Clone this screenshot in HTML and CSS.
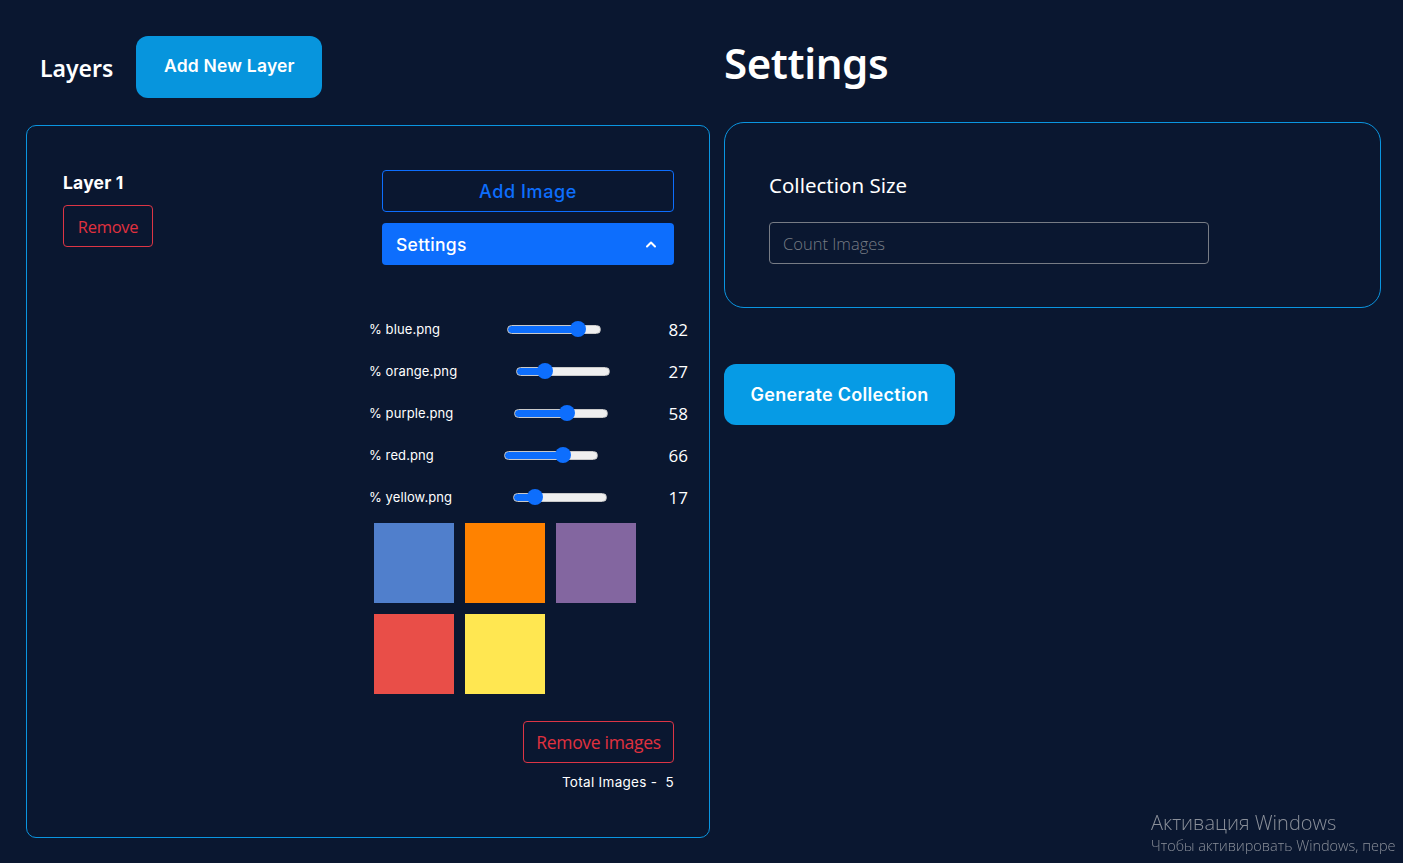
FILE: index.html
```html
<!DOCTYPE html>
<html lang="en">
<head>
<meta charset="utf-8">
<title>Layers</title>
<link rel="stylesheet" href="styles.css">
</head>
<body>
<div class="page">
  <section class="col-left">
    <header class="left-head">
      <h2 class="layers-title">Layers</h2>
      <button class="btn-primary add-layer">Add New Layer</button>
    </header>
    <div class="layer-panel">
      <div class="layer-info">
        <div class="layer-name">Layer 1</div>
        <button class="btn-outline-danger btn-remove">Remove</button>
      </div>
      <div class="layer-body">
        <button class="btn-outline-blue add-image">Add Image</button>
        <div class="settings-bar">
          <span>Settings</span>
          <svg class="chev" width="12" height="8" viewBox="0 0 12 8"><path d="M2 6.5 L6 2.5 L10 6.5" fill="none" stroke="#fff" stroke-width="2" stroke-linecap="round" stroke-linejoin="round"/></svg>
        </div>
        <div class="sliders">
          <div class="srow"><span class="slabel">% blue.png</span><input class="rng" type="range" min="0" max="100" value="82" style="--v:82"><span class="snum">82</span></div>
          <div class="srow"><span class="slabel">% orange.png</span><input class="rng" type="range" min="0" max="100" value="27" style="--v:27"><span class="snum">27</span></div>
          <div class="srow"><span class="slabel">% purple.png</span><input class="rng" type="range" min="0" max="100" value="58" style="--v:58"><span class="snum">58</span></div>
          <div class="srow"><span class="slabel">% red.png</span><input class="rng" type="range" min="0" max="100" value="66" style="--v:66"><span class="snum">66</span></div>
          <div class="srow"><span class="slabel">% yellow.png</span><input class="rng" type="range" min="0" max="100" value="17" style="--v:17"><span class="snum">17</span></div>
        </div>
        <div class="thumbs">
          <div class="sq sq-blue"></div>
          <div class="sq sq-orange"></div>
          <div class="sq sq-purple"></div>
          <div class="sq sq-red"></div>
          <div class="sq sq-yellow"></div>
        </div>
        <div class="layer-foot">
          <button class="btn-outline-danger btn-remove-images">Remove images</button>
          <div class="total">Total Images -&nbsp; 5</div>
        </div>
      </div>
    </div>
  </section>
  <section class="col-right">
    <h1 class="settings-title">Settings</h1>
    <div class="settings-panel">
      <div class="cs-label">Collection Size</div>
      <input class="count-input" type="text" placeholder="Count Images">
    </div>
    <button class="btn-primary generate">Generate Collection</button>
  </section>
</div>
<div class="watermark">
  <div class="wm-1">Активация Windows</div>
  <div class="wm-2">Чтобы активировать Windows, пере</div>
</div>
</body>
</html>
```

FILE: styles.css
```css
* { box-sizing: border-box; }
html, body { margin: 0; padding: 0; }
body {
  background: #0a1730;
  color: #fff;
  font-family: "Noto Sans", "Open Sans", sans-serif;
  overflow: hidden;
  width: 1403px;
  height: 863px;
}
button { font-family: inherit; cursor: pointer; }

.page {
  display: flex;
  gap: 14px;
  padding: 36px 0 0 26px;
}

/* Left column */
.col-left { width: 684px; display: flex; flex-direction: column; }
.left-head {
  display: flex;
  align-items: center;
  gap: 23px;
  padding-left: 14px;
  height: 62px;
}
.layers-title {
  margin: 0;
  font-size: 23px;
  font-weight: 600;
  padding-top: 2px;
}
.btn-primary {
  background: #0795dd;
  color: #fff;
  border: none;
  border-radius: 12px;
  font-family: "Inter", sans-serif;
  font-weight: 600;
}
.add-layer {
  width: 186px;
  height: 62px;
  font-size: 17.5px;
  letter-spacing: 0.2px;
  padding-bottom: 4px;
}

.layer-panel {
  margin-top: 27px;
  height: 713px;
  border: 1px solid #0a95e0;
  border-radius: 10px;
  display: flex;
  justify-content: space-between;
  padding: 44px 21px 0 36px;
}
.layer-info { display: flex; flex-direction: column; align-items: flex-start; }
.layer-name {
  font-family: "Inter", sans-serif;
  font-weight: 700;
  font-size: 17.5px;
  letter-spacing: 0.2px;
  margin-top: 2px;
  height: 22px;
}
.btn-outline-danger {
  background: transparent;
  border: 1px solid #dc3545;
  color: #e0313f;
  border-radius: 4px;
  font-weight: 400;
  font-family: "Open Sans", sans-serif;
  letter-spacing: -0.3px;
}
.btn-remove {
  margin-top: 11px;
  width: 90px;
  height: 42px;
  font-size: 16.5px;
}

.layer-body {
  width: 319px;
  display: flex;
  flex-direction: column;
}
.btn-outline-blue {
  background: transparent;
  border: 1px solid #0d6efd;
  color: #0d6efd;
  border-radius: 4px;
  font-family: "Inter", sans-serif;
  font-weight: 500;
}
.add-image {
  margin: 0 14px 0 13px;
  height: 42px;
  font-size: 18px;
  letter-spacing: 0.6px;
}
.settings-bar {
  margin: 11px 14px 0 13px;
  height: 42px;
  background: #0d6efd;
  border-radius: 4px;
  display: flex;
  align-items: center;
  justify-content: space-between;
  padding: 0 17px 0 14px;
  font-family: "Inter", sans-serif;
  font-weight: 500;
  font-size: 17.5px;
  letter-spacing: 0.3px;
}
.chev { display: block; }

.sliders { margin-top: 43px; display: flex; flex-direction: column; }
.srow {
  height: 42px;
  display: flex;
  align-items: center;
  justify-content: space-between;
}
.slabel {
  font-family: "Inter", sans-serif;
  font-size: 13px;
  font-weight: 400;
  letter-spacing: 0.1px;
}
.snum {
  font-family: "Open Sans", sans-serif;
  font-size: 17px;
  width: 20px;
  text-align: right;
}
.rng {
  -webkit-appearance: none;
  appearance: none;
  margin: 0;
  width: 94px;
  height: 9px;
  border-radius: 5px;
  border: 1px solid #c9c9c9;
  background: linear-gradient(to right, #0d6efd calc(7px + var(--v) * 0.78px), #efefef calc(7px + var(--v) * 0.78px));
}
.rng::-webkit-slider-thumb {
  -webkit-appearance: none;
  width: 16px;
  height: 16px;
  border-radius: 50%;
  background: #0d6efd;
  border: none;
}

.thumbs {
  margin-top: 5px;
  padding-left: 5px;
  display: grid;
  grid-template-columns: repeat(3, 80px);
  grid-auto-rows: 80px;
  gap: 11px;
}
.sq-blue { background: #507fcc; }
.sq-orange { background: #ff8200; }
.sq-purple { background: #8366a0; }
.sq-red { background: #e94e48; }
.sq-yellow { background: #ffe751; }

.layer-foot {
  display: flex;
  flex-direction: column;
  align-items: flex-end;
  margin-right: 14px;
  margin-top: 27px;
}
.btn-remove-images {
  width: 151px;
  height: 42px;
  font-size: 17.5px;
}
.total {
  margin-top: 11px;
  font-family: "Inter", sans-serif;
  font-size: 13.5px;
  letter-spacing: 0.3px;
}

/* Right column */
.col-right { width: 657px; display: flex; flex-direction: column; align-items: flex-start; }
.settings-title {
  margin: 0;
  height: 86px;
  font-size: 42px;
  font-weight: 600;
  line-height: 1;
  letter-spacing: -0.4px;
  padding-top: 6px;
}
.settings-panel {
  width: 657px;
  height: 186px;
  border: 1px solid #0a95e0;
  border-radius: 20px;
  padding: 48px 0 0 44px;
}
.cs-label {
  font-size: 20.5px;
  font-weight: 400;
  height: 27px;
}
.count-input {
  margin-top: 24px;
  width: 440px;
  height: 42px;
  background: transparent;
  border: 1px solid #777c85;
  border-radius: 4px;
  padding: 0 13px;
  font-family: "Open Sans", sans-serif;
  font-size: 16.5px;
  font-weight: 300;
  color: #fff;
  outline: none;
}
.count-input::placeholder { color: #777c84; }
.generate {
  margin-top: 56px;
  width: 231px;
  height: 61px;
  font-size: 18px;
  letter-spacing: 0.3px;
  background: #069be5;
}

.watermark {
  position: fixed;
  left: 1151px;
  top: 810px;
  white-space: nowrap;
  color: #8b909a;
  font-family: "Open Sans", sans-serif;
  font-weight: 300;
}
.wm-1 { font-size: 20px; line-height: 26px; }
.wm-2 { font-size: 14.5px; line-height: 20px; }
```
